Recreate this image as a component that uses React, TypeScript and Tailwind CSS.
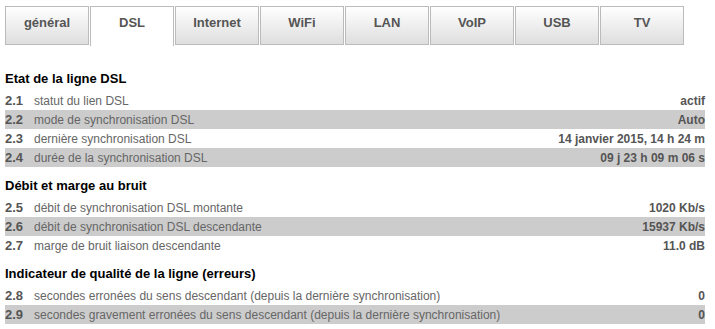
import React from "react";

type Row = { num: string; label: string; value: string };
type Section = { title: string; rows: Row[] };

const tabs = ["général", "DSL", "Internet", "WiFi", "LAN", "VoIP", "USB", "TV"];

const sections: Section[] = [
  {
    title: "Etat de la ligne DSL",
    rows: [
      { num: "2.1", label: "statut du lien DSL", value: "actif" },
      { num: "2.2", label: "mode de synchronisation DSL", value: "Auto" },
      { num: "2.3", label: "dernière synchronisation DSL", value: "14 janvier 2015, 14 h 24 m" },
      { num: "2.4", label: "durée de la synchronisation DSL", value: "09 j 23 h 09 m 06 s" },
    ],
  },
  {
    title: "Débit et marge au bruit",
    rows: [
      { num: "2.5", label: "débit de synchronisation DSL montante", value: "1020 Kb/s" },
      { num: "2.6", label: "débit de synchronisation DSL descendante", value: "15937 Kb/s" },
      { num: "2.7", label: "marge de bruit liaison descendante", value: "11.0 dB" },
    ],
  },
  {
    title: "Indicateur de qualité de la ligne (erreurs)",
    rows: [
      {
        num: "2.8",
        label: "secondes erronées du sens descendant (depuis la dernière synchronisation)",
        value: "0",
      },
      {
        num: "2.9",
        label: "secondes gravement erronées du sens descendant (depuis la dernière synchronisation)",
        value: "0",
      },
    ],
  },
];

export default function App() {
  const active = "DSL";

  return (
    <div className="w-[715px] h-[329px] bg-white overflow-hidden font-['Liberation_Sans',Arial,sans-serif]">
      {/* tab bar */}
      <div className="flex gap-px pl-[5px] pt-[6px] h-[46px]">
        {tabs.map((t) =>
          t === active ? (
            <div
              key={t}
              className="w-[84px] h-[40px] bg-white border border-b-0 border-[#bbbbbb] text-center pt-[9px] text-[13px] leading-[14px] font-bold text-[#555]"
            >
              {t}
            </div>
          ) : (
            <div
              key={t}
              className="w-[84px] h-[39px] border border-[#bbbbbb] bg-gradient-to-b from-white to-[#dedede] text-center pt-[9px] text-[13px] leading-[14px] font-bold text-[#555]"
            >
              {t}
            </div>
          )
        )}
      </div>

      <div className="px-[5px] w-[710px] pt-[25px]">
        {sections.map((s, si) => (
          <div key={s.title}>
            <h2
              className={`${si === 0 ? "" : "mt-[11px]"} mb-[4px] text-[13px] leading-[16px] font-bold text-black`}
            >
              {s.title}
            </h2>
            {s.rows.map((r, i) => (
              <div
                key={r.num}
                className={`flex items-center h-[19px] text-[12px] ${i % 2 === 1 ? "bg-[#cccccc]" : ""}`}
              >
                <span className="w-[29px] font-bold text-[#555] text-[13px]">{r.num}</span>
                <span className="flex-1 text-[#666]">{r.label}</span>
                <span className="font-bold text-[#555]">{r.value}</span>
              </div>
            ))}
          </div>
        ))}
      </div>
    </div>
  );
}
